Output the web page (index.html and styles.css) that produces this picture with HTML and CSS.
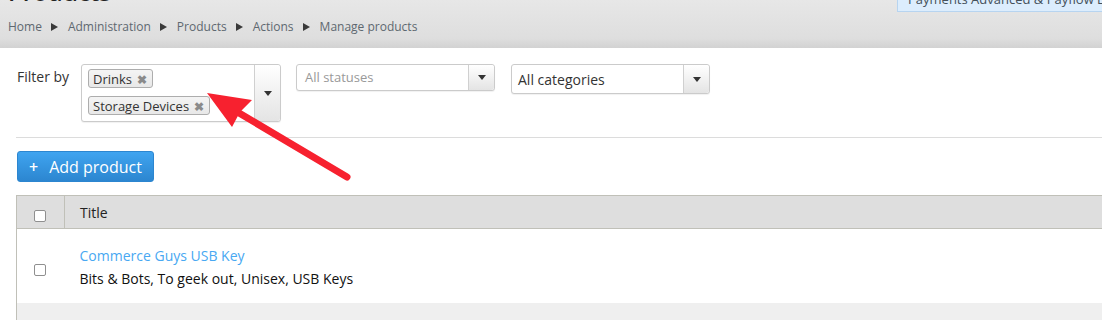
FILE: index.html
```html
<!DOCTYPE html>
<html lang="en">
<head>
  <meta charset="UTF-8">
  <title>Manage products</title>
  <link rel="stylesheet" href="styles.css">
</head>
<body>

  <header class="page-header">
    <h1>Products</h1>
    <div class="notice">Payments Advanced &amp; Payflow Link integration</div>
    <nav class="breadcrumb">
      <a href="#">Home</a><span class="sep"></span>
      <a href="#">Administration</a><span class="sep"></span>
      <a href="#">Products</a><span class="sep"></span>
      <a href="#">Actions</a><span class="sep"></span>
      <span>Manage products</span>
    </nav>
  </header>

  <section class="filters">
    <label class="filter-label">Filter by</label>

    <div class="select multi">
      <div class="choices">
        <span class="tag">Drinks <b>&#x2716;</b></span>
        <span class="tag">Storage Devices <b>&#x2716;</b></span>
      </div>
      <div class="toggle"><i class="caret"></i></div>
    </div>

    <div class="select status">
      <div class="value placeholder">All statuses</div>
      <div class="toggle"><i class="caret"></i></div>
    </div>

    <div class="select category">
      <div class="value">All categories</div>
      <div class="toggle"><i class="caret"></i></div>
    </div>
  </section>

  <hr class="divider">

  <button class="btn-add"><span class="plus">+</span>Add product</button>

  <table class="products">
    <thead>
      <tr>
        <th class="check"><input type="checkbox"></th>
        <th>Title</th>
      </tr>
    </thead>
    <tbody>
      <tr>
        <td class="check"><input type="checkbox"></td>
        <td>
          <a href="#" class="title">Commerce Guys USB Key</a>
          <div class="cats">Bits &amp; Bots, To geek out, Unisex, USB Keys</div>
        </td>
      </tr>
      <tr class="odd">
        <td class="check"></td>
        <td></td>
      </tr>
    </tbody>
  </table>

  <!-- annotation arrow drawn over the page -->
  <svg class="arrow" width="1102" height="320" viewBox="0 0 1102 320">
    <line x1="347" y1="177" x2="234" y2="110" stroke="#f7212f" stroke-width="7" stroke-linecap="round"/>
    <polygon points="207,93 252,100 240,112 232,127" fill="#f7212f"/>
  </svg>

</body>
</html>
```

FILE: styles.css
```css
body {
  margin: 0;
  font-family: "Open Sans", "Liberation Sans", sans-serif;
  color: #333;
  background: #fff;
  overflow: hidden;
  position: relative;
  width: 1102px;
  height: 320px;
}

.page-header {
  display: flow-root;
  height: 48px;
  padding: 0 8px;
  box-sizing: border-box;
  background: linear-gradient(#e7e7e7, #dedede 80%, #d2d2d2);
  position: relative;
}

.page-header h1 {
  margin: -23px 0 0;
  font-size: 24px;
  line-height: 30px;
  font-weight: 600;
  color: #222;
}

.notice {
  position: absolute;
  left: 897px;
  top: -14px;
  right: -20px;
  height: 26px;
  padding: 0 10px;
  box-sizing: border-box;
  background: #dcedfd;
  border: 1px solid #b7d4f0;
  font-size: 13px;
  line-height: 24px;
  color: #44505a;
  white-space: nowrap;
}

.breadcrumb {
  margin-top: 11px;
  font-size: 12px;
  line-height: 18px;
  color: #5e6870;
  display: flex;
  align-items: center;
}

.breadcrumb a {
  color: #5e6870;
  text-decoration: none;
}

.sep {
  display: inline-block;
  width: 0;
  height: 0;
  margin: 0 10px 0 9px;
  border-left: 7px solid #3a3a3a;
  border-top: 4px solid transparent;
  border-bottom: 4px solid transparent;
}

.filters {
  display: flex;
  align-items: flex-start;
  padding: 16px 0 0 17px;
}

.filter-label {
  width: 64px;
  margin-top: 3px;
  font-size: 14px;
  line-height: 20px;
  color: #333;
}

.select {
  display: flex;
  box-sizing: border-box;
  width: 199px;
  border: 1px solid #cbcbcb;
  border-radius: 3px;
  background: #fff;
  box-shadow: 0 1px 1px rgba(0, 0, 0, 0.06);
  margin-right: 15px;
}

.select.multi {
  width: 200px;
  height: 58px;
}

.select.status {
  height: 27px;
}

.select.category {
  height: 30px;
  margin-left: 1px;
}

.choices {
  flex: 1;
  display: flex;
  flex-direction: column;
  align-items: flex-start;
  gap: 8px;
  padding: 4px 6px;
}

.tag {
  box-sizing: border-box;
  height: 19px;
  padding: 0 5px 0 4px;
  border: 1px solid #adadad;
  border-radius: 3px;
  background: linear-gradient(#f4f4f4, #e8e8e8);
  font-size: 13px;
  line-height: 18px;
  color: #333;
  white-space: nowrap;
}

.tag b {
  margin-left: 2px;
  font-size: 12px;
  color: #8a8a8a;
}

.value {
  flex: 1;
  align-self: center;
  padding-left: 6px;
  font-size: 14px;
  color: #333;
}

.value.placeholder {
  padding-left: 8px;
  font-size: 13px;
  color: #999;
  margin-top: -1px;
}

.toggle {
  width: 25px;
  display: flex;
  align-items: center;
  justify-content: center;
  border-left: 1px solid #d0d0d0;
  border-radius: 0 3px 3px 0;
  background: linear-gradient(#fff, #e4e4e4);
}

.caret {
  width: 0;
  height: 0;
  border-top: 5px solid #333;
  border-left: 4px solid transparent;
  border-right: 4px solid transparent;
}

.divider {
  margin: 15px 0 0 16px;
  border: 0;
  border-top: 1px solid #dcdcdc;
}

.btn-add {
  display: flex;
  align-items: center;
  margin: 13px 0 0 17px;
  height: 31px;
  padding: 0 11px 0 11px;
  border: 1px solid #2c86d0;
  border-radius: 3px;
  background: linear-gradient(#3fa4f0, #2c86d0);
  color: #fff;
  font-family: "Open Sans", "Liberation Sans", sans-serif;
  font-size: 16px;
}

.plus {
  margin-right: 11px;
  font-weight: 600;
}

.products {
  margin: 13px 0 0 16px;
  width: 1120px;
  border-collapse: collapse;
  border-left: 1px solid #c0c0b8;
  font-size: 14px;
}

.products th {
  height: 31px;
  padding: 1px 16px 0 15px;
  background: #dedede;
  border-top: 1px solid #c0c0b8;
  border-bottom: 1px solid #c0c0b8;
  text-align: left;
  font-weight: 400;
  color: #222;
}

.products th.check,
.products td.check {
  width: 47px;
  padding: 0;
  text-align: center;
}

.products th.check {
  border-right: 1px solid #c0c0b8;
}

.products td {
  height: 74px;
  padding: 0 16px 0 15px;
  vertical-align: middle;
}

.products tr.odd td {
  background: #efefef;
  height: 18px;
}

input[type="checkbox"] {
  appearance: none;
  width: 12px;
  height: 12px;
  margin: 4px 0 0 -1px;
  border: 1px solid #8f8f8f;
  border-radius: 2px;
  background: #fff;
  vertical-align: middle;
}

.title {
  display: block;
  color: #48a8f2;
  text-decoration: none;
  line-height: 22px;
  margin-top: 2px;
}

.cats {
  color: #111;
  line-height: 22px;
  margin-top: 1px;
}

.arrow {
  position: absolute;
  left: 0;
  top: 0;
  pointer-events: none;
}
```
